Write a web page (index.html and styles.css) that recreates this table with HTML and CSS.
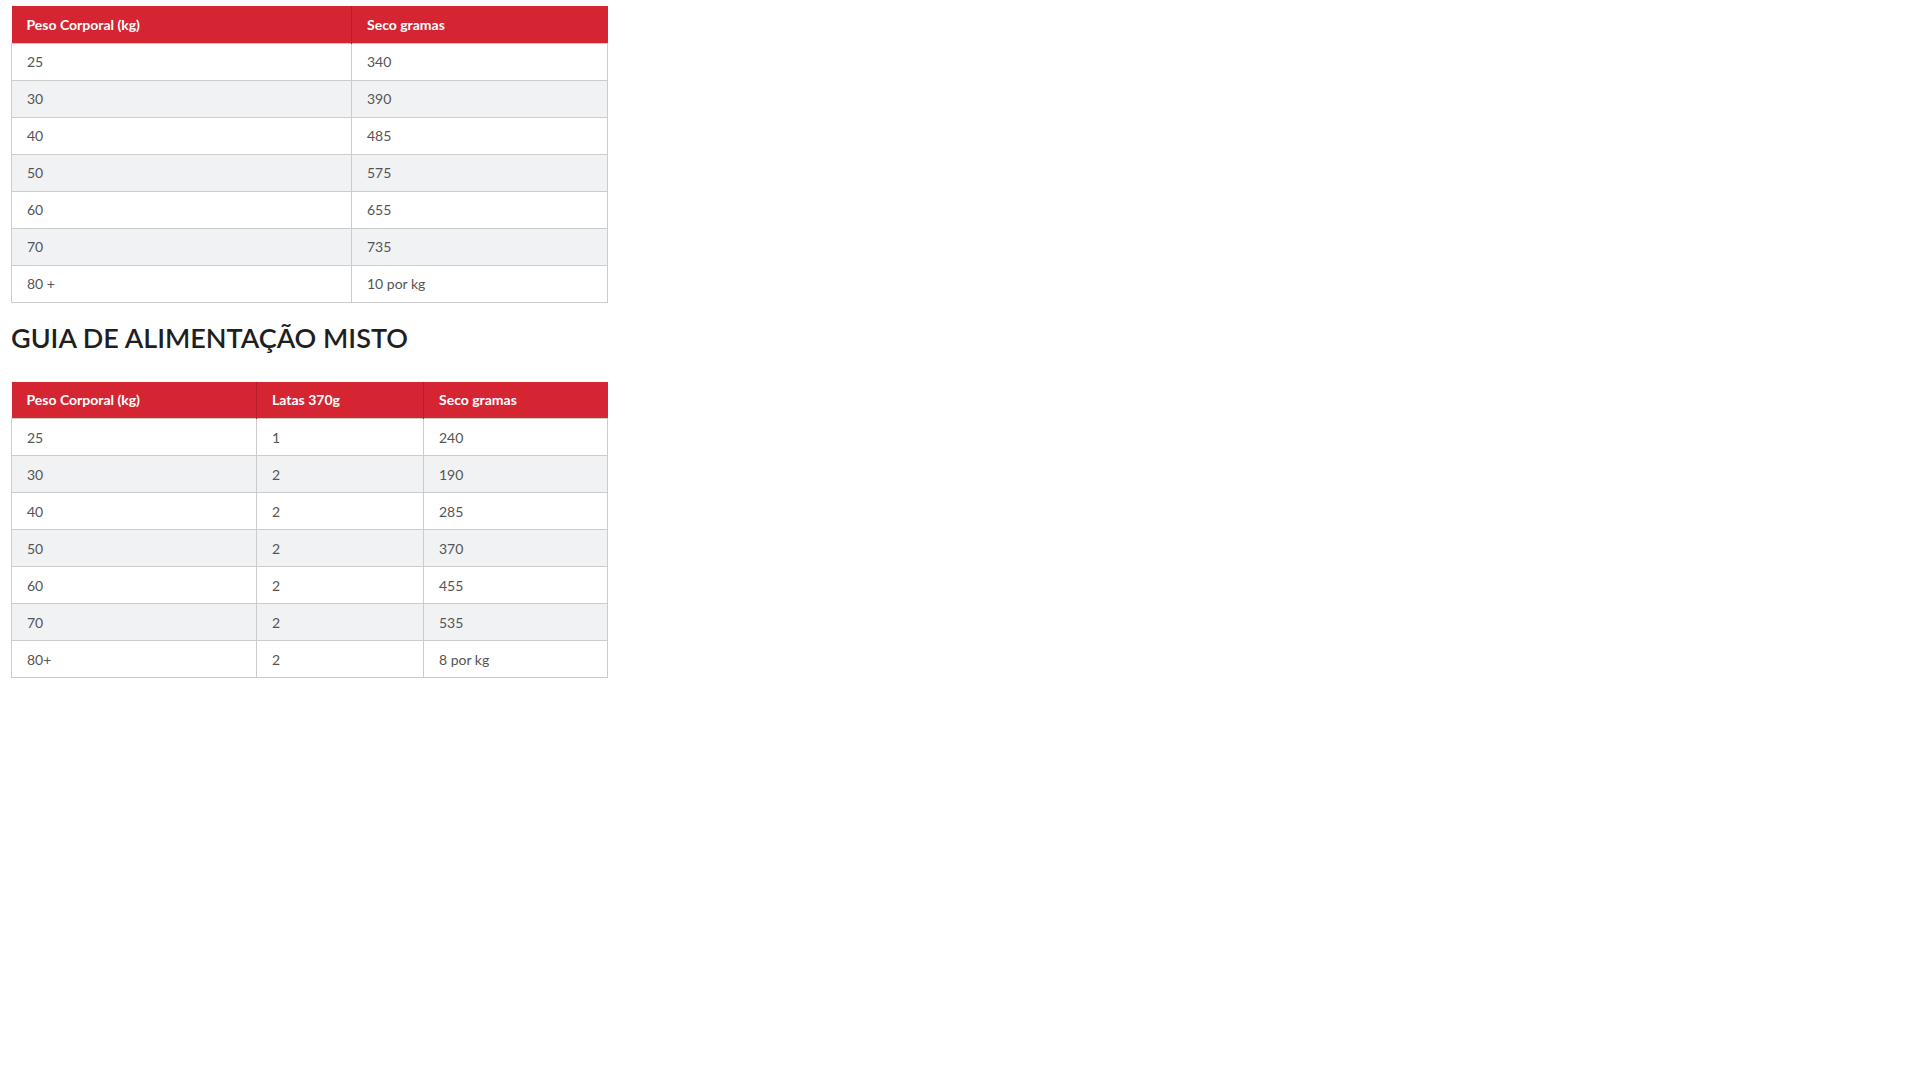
FILE: index.html
```html
<!DOCTYPE html>
<html lang="pt">
<head>
<meta charset="utf-8">
<title>Guia de alimentação</title>
<link rel="stylesheet" href="styles.css">
</head>
<body>
<div class="page">
  <table class="feed feed-dry">
    <colgroup><col class="c1a"><col class="c1b"></colgroup>
    <thead>
      <tr><th>Peso Corporal (kg)</th><th>Seco gramas</th></tr>
    </thead>
    <tbody>
      <tr><td>25</td><td>340</td></tr>
      <tr><td>30</td><td>390</td></tr>
      <tr><td>40</td><td>485</td></tr>
      <tr><td>50</td><td>575</td></tr>
      <tr><td>60</td><td>655</td></tr>
      <tr><td>70</td><td>735</td></tr>
      <tr><td>80 +</td><td>10 por kg</td></tr>
    </tbody>
  </table>

  <h2 class="title">GUIA DE ALIMENTAÇÃO MISTO</h2>

  <table class="feed feed-mixed">
    <colgroup><col class="c2a"><col class="c2b"><col class="c2c"></colgroup>
    <thead>
      <tr><th>Peso Corporal (kg)</th><th>Latas 370g</th><th>Seco gramas</th></tr>
    </thead>
    <tbody>
      <tr><td>25</td><td>1</td><td>240</td></tr>
      <tr><td>30</td><td>2</td><td>190</td></tr>
      <tr><td>40</td><td>2</td><td>285</td></tr>
      <tr><td>50</td><td>2</td><td>370</td></tr>
      <tr><td>60</td><td>2</td><td>455</td></tr>
      <tr><td>70</td><td>2</td><td>535</td></tr>
      <tr><td>80+</td><td>2</td><td>8 por kg</td></tr>
    </tbody>
  </table>
</div>
</body>
</html>
```

FILE: styles.css
```css
html, body {
  margin: 0;
  padding: 0;
  background: #ffffff;
}

body {
  font-family: Lato, "Open Sans", "Liberation Sans", sans-serif;
  color: #555555;
}

.page {
  padding: 6px 11px;
}

.feed {
  border-collapse: collapse;
  table-layout: fixed;
  width: 596px;
  font-size: 14px;
}

.c1a { width: 340px; }
.c1b { width: 256px; }

.c2a { width: 245px; }
.c2b { width: 167px; }
.c2c { width: 184px; }

.feed th {
  background: #d52532;
  color: #ffffff;
  font-weight: 700;
  text-align: left;
  height: 37px;
  padding: 0 15px;
  border-left: 1px solid #b51e2a;
  box-sizing: border-box;
}

.feed th:first-child {
  border-left: 0;
}

.feed td {
  height: 37px;
  padding: 0 15px;
  border: 1px solid #cccccc;
  box-sizing: border-box;
  text-align: left;
}

.feed tbody tr:nth-child(even) td {
  background: #f1f2f4;
}

.title {
  margin: 0;
  padding: 19px 0 28px;
  font-size: 27px;
  line-height: 32px;
  font-weight: 600;
  color: #1f1f1f;
}
```
